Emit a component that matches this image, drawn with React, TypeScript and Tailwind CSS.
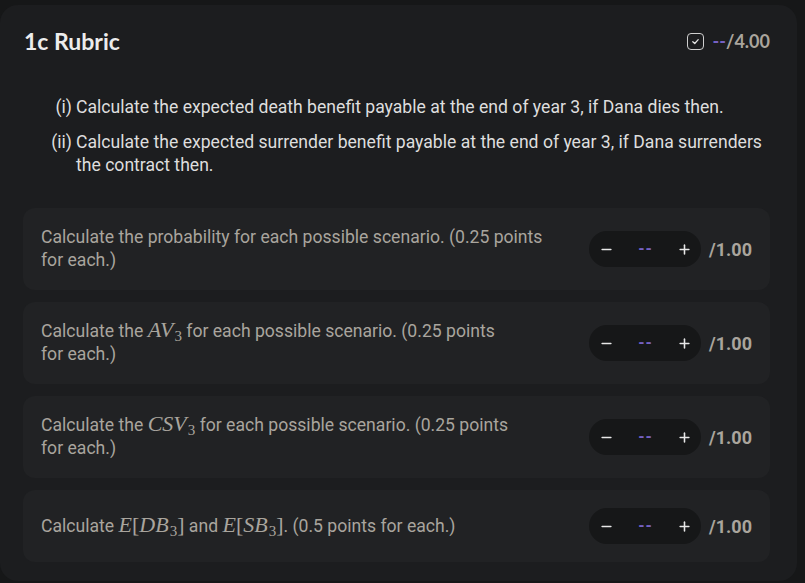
import { Minus, Plus } from 'lucide-react';
import type { ReactNode } from 'react';

function MathVar({ base, sub }: { base: string; sub?: string }) {
  return (
    <span className="font-['Liberation_Serif',serif] text-[22px] leading-[0]">
      <span className="italic">{base}</span>
      {sub && <span className="text-[15px] leading-[0] relative top-[4px] ml-[1px]">{sub}</span>}
    </span>
  );
}

function Bracket({ children }: { children: ReactNode }) {
  return (
    <span className="font-['Liberation_Serif',serif] text-[22px] leading-[0]">
      <span className="italic">E</span>[{children}]
    </span>
  );
}

interface Item {
  id: number;
  text: ReactNode;
}

const items: Item[] = [
  { id: 1, text: <>Calculate the probability for each possible scenario. (0.25 points for each.)</> },
  {
    id: 2,
    text: (
      <>
        Calculate the <MathVar base="AV" sub="3" /> for each possible scenario. (0.25 points
        <br />
        for each.)
      </>
    ),
  },
  {
    id: 3,
    text: (
      <>
        Calculate the <MathVar base="CSV" sub="3" /> for each possible scenario. (0.25 points
        <br />
        for each.)
      </>
    ),
  },
  {
    id: 4,
    text: (
      <>
        Calculate{' '}
        <Bracket>
          <MathVar base="DB" sub="3" />
        </Bracket>{' '}
        and{' '}
        <Bracket>
          <MathVar base="SB" sub="3" />
        </Bracket>
        . (0.5 points for each.)
      </>
    ),
  },
];

export default function App() {
  return (
    <div className="w-[805px] h-[583px] overflow-hidden bg-[#161718] pt-[5px] font-['Roboto',sans-serif]">
      <div className="w-[797px] h-[576px] bg-[#1c1d1f] rounded-[18px] pl-[23px] pr-[27px]">
        {/* Header */}
        <div className="flex items-center justify-between h-[72px]">
          <h1 className="ml-[1px] text-[23px] font-bold text-[#ececec] font-['Lato',sans-serif]">1c Rubric</h1>
          <div className="flex items-center gap-[9px] font-['Lato',sans-serif] text-[18px] font-bold">
            <span className="w-[17px] h-[17px] rounded-[4px] border-[1.5px] border-[#cfcfcf] flex items-center justify-center">
              <svg width="9" height="9" viewBox="0 0 10 10" fill="none">
                <path d="M2 5.2 L4.2 7.2 L8 3" stroke="#e6e6e6" strokeWidth="1.4" strokeLinecap="round" strokeLinejoin="round" />
              </svg>
            </span>
            <span>
              <span className="text-[#7561c4]">--</span>
              <span className="text-[#aaa59d]">/4.00</span>
            </span>
          </div>
        </div>

        {/* Question */}
        <ol className="mt-[19px] text-[17.6px] leading-[23px] text-[#dedede] flex flex-col gap-[12px]">
          <li className="flex">
            <span className="w-[53px] shrink-0 text-right pr-[4px]">(i)</span>
            <span>Calculate the expected death benefit payable at the end of year 3, if Dana dies then.</span>
          </li>
          <li className="flex">
            <span className="w-[53px] shrink-0 text-right pr-[4px]">(ii)</span>
            <span>
              Calculate the expected surrender benefit payable at the end of year 3, if Dana surrenders the contract then.
            </span>
          </li>
        </ol>

        {/* Rubric items */}
        <div className="mt-[31px] flex flex-col gap-[12px]">
          {items.map((item) => (
            <div
              key={item.id}
              className="flex items-center bg-[#212224] rounded-[12px] px-[18px] py-[18px]"
            >
              <div className="flex-1 pr-[40px] text-[17.6px] leading-[23px] text-[#a9a59e]">{item.text}</div>
              <div className="flex items-center gap-[8px]">
                <div className="flex items-center justify-between w-[112px] h-[36px] rounded-full bg-[#161718] pl-[10px] pr-[9px]">
                  <Minus className="w-[15px] h-[15px] text-[#e8e8e8]" strokeWidth={2.5} />
                  <span className="text-[#7561c4] font-bold text-[16px] tracking-[1px]">--</span>
                  <Plus className="w-[15px] h-[15px] text-[#e8e8e8]" strokeWidth={2.5} />
                </div>
                <span className="text-[18px] font-bold text-[#aaa59d]">/1.00</span>
              </div>
            </div>
          ))}
        </div>
      </div>
    </div>
  );
}
